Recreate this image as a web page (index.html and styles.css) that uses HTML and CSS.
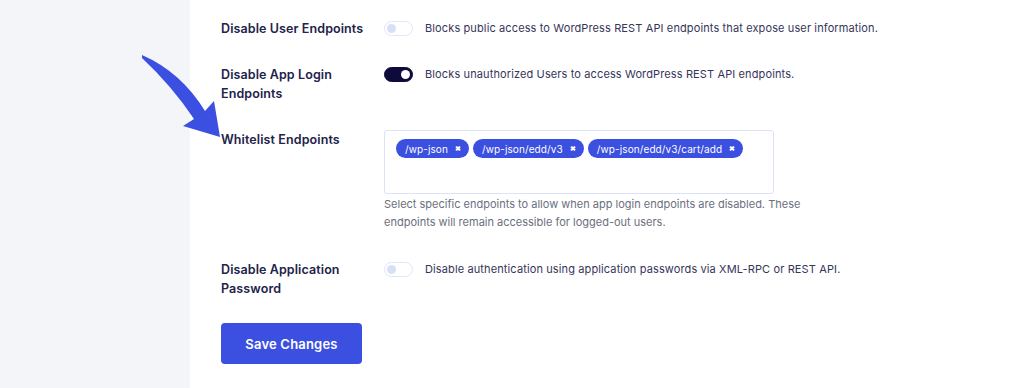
FILE: index.html
```html
<!DOCTYPE html>
<html lang="en">
<head>
<meta charset="utf-8">
<title>Settings</title>
<link rel="stylesheet" href="styles.css">
</head>
<body>
<div class="page">
  <aside class="sidebar"></aside>
  <main class="panel">
    <svg class="arrow" width="100" height="100" viewBox="130 45 100 100" xmlns="http://www.w3.org/2000/svg">
      <path d="M142,55 Q181,72 205,111 L214,101 L220,137 L183,126 L194,119 Q172,86 142,58 Z" fill="#3b4fe0"/>
    </svg>
    <div class="row row-1">
      <div class="label">Disable User Endpoints</div>
      <div class="control">
        <span class="toggle"><span class="knob"></span></span>
        <span class="desc">Blocks public access to WordPress REST API endpoints that expose user information.</span>
      </div>
    </div>
    <div class="row row-2">
      <div class="label">Disable App Login<br>Endpoints</div>
      <div class="control">
        <span class="toggle on"><span class="knob"></span></span>
        <span class="desc">Blocks unauthorized Users to access WordPress REST API endpoints.</span>
      </div>
    </div>
    <div class="row row-3">
      <div class="label">Whitelist Endpoints</div>
      <div class="field">
        <div class="tagbox">
          <span class="chip">/wp-json <span class="x">✖</span></span>
          <span class="chip">/wp-json/edd/v3 <span class="x">✖</span></span>
          <span class="chip">/wp-json/edd/v3/cart/add <span class="x">✖</span></span>
        </div>
        <p class="help">Select specific endpoints to allow when app login endpoints are disabled. These endpoints will remain accessible for logged-out users.</p>
      </div>
    </div>
    <div class="row row-4">
      <div class="label">Disable Application<br>Password</div>
      <div class="control">
        <span class="toggle"><span class="knob"></span></span>
        <span class="desc">Disable authentication using application passwords via XML-RPC or REST API.</span>
      </div>
    </div>
    <button class="save">Save Changes</button>
  </main>
</div>
</body>
</html>
```

FILE: styles.css
```css
* { box-sizing: border-box; }
html, body { margin: 0; padding: 0; }
body {
  width: 1024px;
  height: 388px;
  overflow: hidden;
  font-family: "Inter", "Open Sans", sans-serif;
  background: #ffffff;
}
.page {
  display: flex;
  height: 388px;
}
.sidebar {
  width: 190px;
  flex: none;
  background: #f4f5f8;
}
.panel {
  position: relative;
  flex: 1;
  background: #ffffff;
  padding: 19px 0 0 31px;
}
.arrow {
  position: absolute;
  left: -60px;
  top: 45px;
  overflow: visible;
}
.row {
  display: flex;
  align-items: flex-start;
}
.row-2 { margin-top: 27px; }
.row-3 { margin-top: 27px; }
.row-4 { margin-top: 29px; }
.label {
  width: 163px;
  flex: none;
  font-size: 12.5px;
  font-weight: 600;
  line-height: 19px;
  color: #22224a;
  letter-spacing: 0.1px;
}
.control {
  display: flex;
  align-items: flex-start;
  gap: 12px;
}
.toggle {
  position: relative;
  flex: none;
  width: 29px;
  height: 15px;
  margin-top: 2px;
  border-radius: 8px;
  border: 1.5px solid #e0e6f6;
  background: #ffffff;
}
.toggle .knob {
  position: absolute;
  top: 1.5px;
  left: 2px;
  width: 9px;
  height: 9px;
  border-radius: 50%;
  background: #d8e0f6;
}
.toggle.on {
  background: #0e0b3c;
  border-color: #0e0b3c;
}
.toggle.on .knob {
  left: auto;
  right: 2px;
  background: #ffffff;
}
.desc {
  font-size: 11px;
  line-height: 19px;
  color: #35355a;
  letter-spacing: 0.12px;
}
.field {
  width: 390px;
}
.tagbox {
  height: 64px;
  border: 1.5px solid #dbe3f6;
  border-radius: 3px;
  padding: 8px 11px;
  display: flex;
  align-items: flex-start;
  gap: 4px;
}
.chip {
  display: inline-flex;
  align-items: center;
  gap: 7px;
  height: 19px;
  padding: 0 8px 0 9px;
  border-radius: 10px;
  background: #3b4fe0;
  color: #ffffff;
  font-size: 10px;
  letter-spacing: 0.1px;
  white-space: nowrap;
}
.chip .x {
  font-size: 7px;
  font-weight: 700;
}
.help {
  margin: 1px 0 0;
  font-size: 11px;
  line-height: 18px;
  color: #6b6f80;
  width: 450px;
}
.save {
  display: block;
  margin-top: 25px;
  width: 141px;
  height: 41px;
  border: none;
  border-radius: 4px;
  background: #3b4fe0;
  color: #ffffff;
  font-family: inherit;
  font-size: 13px;
  font-weight: 600;
  letter-spacing: 0.2px;
  cursor: pointer;
}
```
